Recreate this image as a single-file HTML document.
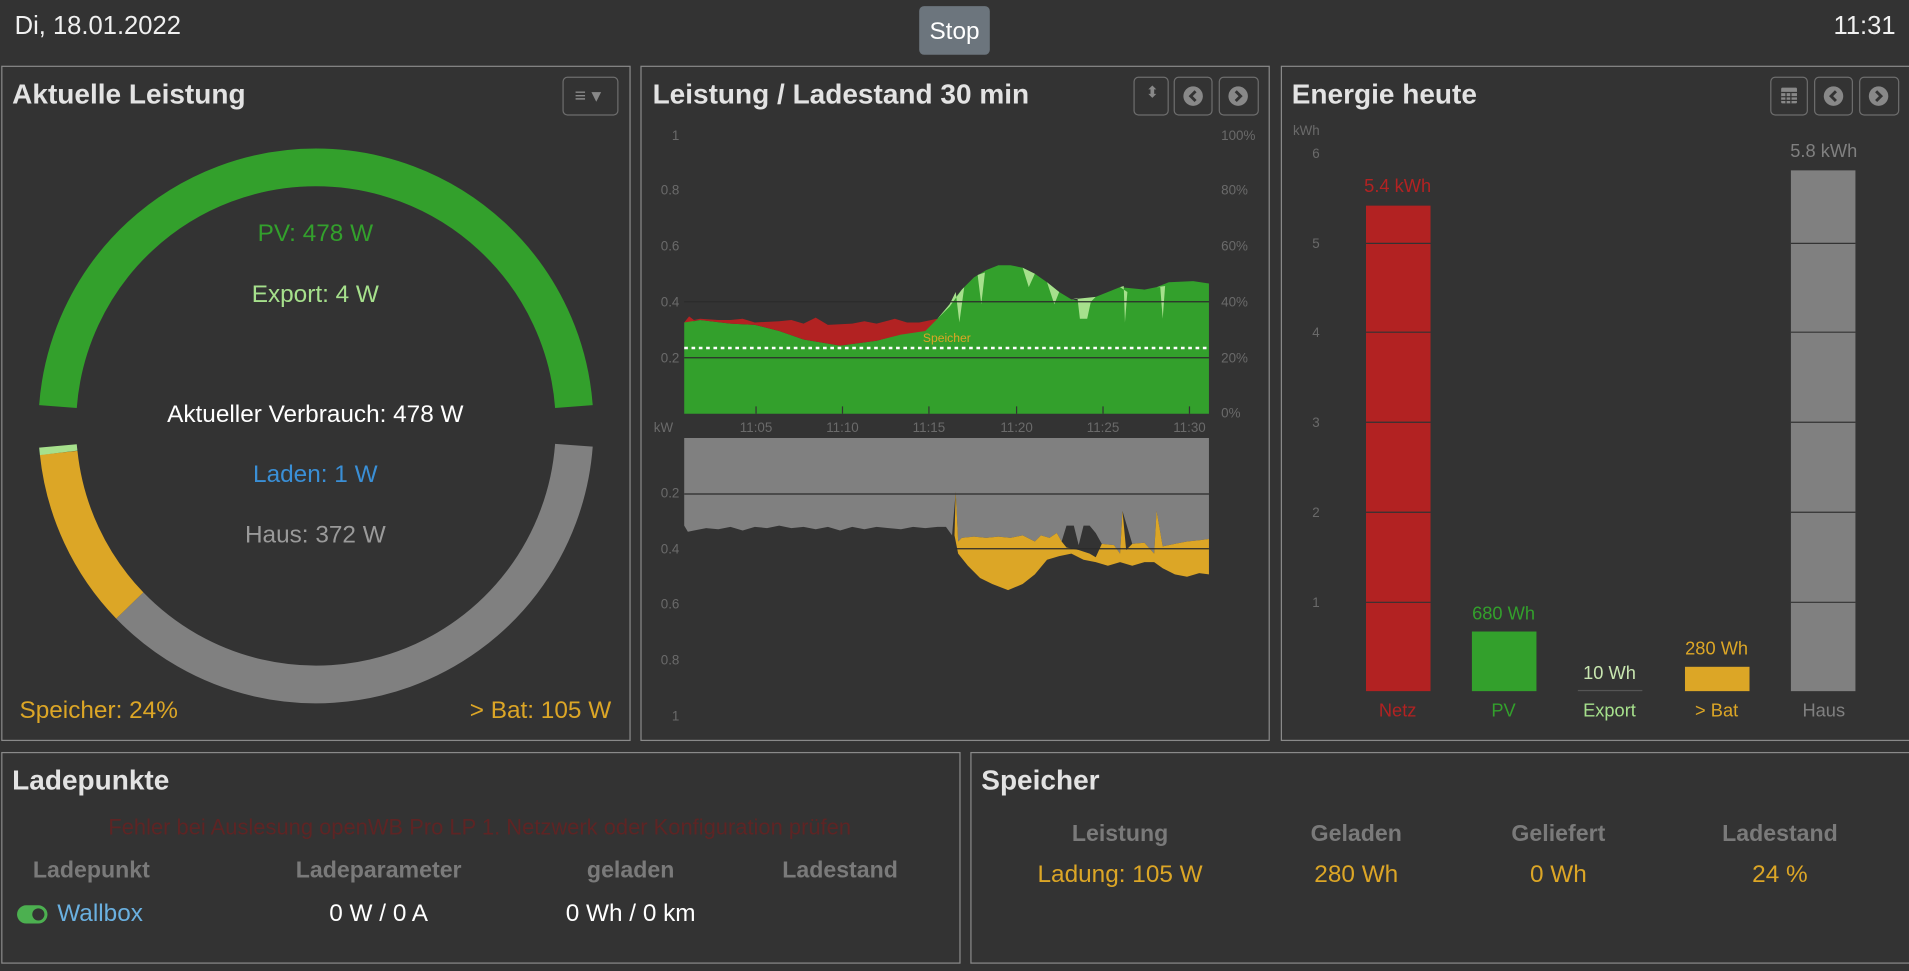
<!DOCTYPE html>
<html><head><meta charset="utf-8"><style>
html,body{margin:0;padding:0;background:#333;width:1909px;height:971px;overflow:hidden}
#c{position:absolute;left:0;top:0;width:1568px;height:798px;transform:scale(1.21747,1.21679);transform-origin:0 0;font-family:"Liberation Sans",sans-serif;color:#e6e6e6}
.a{position:absolute;white-space:nowrap}
.p{position:absolute;border:1px solid #8a8a8a;box-sizing:border-box}
.t{position:absolute;font-size:23px;font-weight:bold;color:#e3e3e3}
.btn{position:absolute;border:1px solid #6d6d6d;border-radius:4px;box-sizing:border-box;height:32px}
.c{transform:translateX(-50%)}
.r{transform:translateX(-100%)}
.ax{font-size:11px;fill:#6a6a6a;font-family:"Liberation Sans",sans-serif}
</style></head><body><div id="c">
<div class="a" style="left:12px;top:10px;font-size:21px;color:#f0f0f0">Di, 18.01.2022</div>
<div class="a" style="left:755px;top:5px;width:58px;height:40px;background:#6c757d;border-radius:4px;color:#fff;font-size:20px;text-align:center;line-height:42px">Stop</div>
<div class="a r" style="left:1557px;top:10px;font-size:21px;color:#f0f0f0">11:31</div>

<div class="p" style="left:1px;top:54px;width:517px;height:555px"></div>
<div class="p" style="left:526px;top:54px;width:517px;height:555px"></div>
<div class="p" style="left:1052px;top:54px;width:517px;height:555px"></div>
<div class="p" style="left:1px;top:618px;width:788px;height:174px"></div>
<div class="p" style="left:797px;top:618px;width:772px;height:174px"></div>

<div class="t" style="left:10px;top:64px">Aktuelle Leistung</div>
<div class="t" style="left:536px;top:64px">Leistung / Ladestand 30 min</div>
<div class="t" style="left:1061px;top:64px">Energie heute</div>
<div class="t" style="left:10px;top:628px">Ladepunkte</div>
<div class="t" style="left:806px;top:628px">Speicher</div>

<div class="btn" style="left:462px;top:63px;width:46px"><span class="a" style="left:9px;top:5px;color:#888;font-size:16px">≡ ▾</span></div>
<div class="btn" style="left:931px;top:63px;width:29px"><span class="a" style="left:9px;top:4px;color:#888;font-size:13px">⬍</span></div>
<div class="btn" style="left:964px;top:63px;width:32px"></div>
<div class="btn" style="left:1001px;top:63px;width:33px"></div>
<div class="btn" style="left:1454px;top:63px;width:31px"></div>
<div class="btn" style="left:1490px;top:63px;width:32px"></div>
<div class="btn" style="left:1527px;top:63px;width:33px"></div>

<svg class="a" style="left:0;top:0" width="1568" height="798">
<g fill="#888"><circle cx="980" cy="79" r="8"/><circle cx="1017" cy="79" r="8"/><circle cx="1506" cy="79" r="8"/><circle cx="1543" cy="79" r="8"/>
<rect x="1463" y="72" width="13" height="13" rx="1"/></g>
<g stroke="#333" stroke-width="2.4" fill="none"><path d="M982 75l-4 4 4 4M1015 75l4 4-4 4M1508 75l-4 4 4 4M1541 75l4 4-4 4"/></g>
<g stroke="#333" stroke-width="1"><path d="M1463 76h13M1463 79.5h13M1463 82.5h13M1467 76v9M1471 76v9"/></g>
<!-- gauge -->
<g fill="none" stroke-width="31">
<path d="M47.6 334.1A212.5 212.5 0 0 1 471.4 334.1" stroke="#33a02c"/>
<path d="M471.4 365.9A212.5 212.5 0 0 1 106.6 497.6" stroke="#808080"/>
<path d="M106.6 497.6A212.5 212.5 0 0 1 48.2 372.2" stroke="#dca626"/>
<path d="M48.2 372.2A212.5 212.5 0 0 1 47.6 366.5" stroke="#a6e08c"/>
</g>
<!-- top chart -->
<path d="M562 340V265L566 263 570 264 575 263 600 266 620 267 640 272 660 279 690 284 720 280 750 272 770 262 780 250 790 238 800 228 810 222 820 218 830 218 840 220 850 225 860 232 870 240 880 246 890 248 900 244 910 240 920 236 930 237 940 238 950 236 960 232 980 231 993 233V340Z" fill="#33a02c"/>
<path d="M562 265L566 260 570 263 575 262 590 263 600 263 610 262 620 265 640 264 650 263 660 266 670 261 680 267 700 266 710 264 720 266 735 262 745 265 755 265 770 262 760 272 740 275 720 280 690 284 660 279 640 272 620 267 600 266 575 263Z" fill="#b22222"/>
<path d="M770 262L780 250 785 240 788 265 792 236 800 228 790 238 780 252ZM880 246L885 245 887 262 893 262 896 248 900 244ZM920 236L923 235 924 265 926 240ZM950 236L953 236 955 262 957 235ZM840 220L845 236 850 225ZM860 232L866 250 870 240ZM803 226L806 250 809 224Z" fill="#a6e08c"/>
<path d="M562 294H993M562 248H993" stroke="#2b2b2b" stroke-width="1"/>
<path d="M562 286H993" stroke="#fff" stroke-width="2" stroke-dasharray="3 3"/>
<text x="758" y="281" font-size="10" fill="#dca626" font-family="Liberation Sans">Speicher</text>
<g stroke="#333" stroke-width="1"><path d="M621 334v6M692 334v6M763 334v6M835 334v6M906 334v6M977 334v6"/></g>
<g class="ax" text-anchor="end"><text x="558" y="115">1</text><text x="558" y="160">0.8</text><text x="558" y="206">0.6</text><text x="558" y="252">0.4</text><text x="558" y="298">0.2</text>
<text x="558" y="409">0.2</text><text x="558" y="455">0.4</text><text x="558" y="500">0.6</text><text x="558" y="546">0.8</text><text x="558" y="592">1</text></g>
<g class="ax"><text x="1003" y="115">100%</text><text x="1003" y="160">80%</text><text x="1003" y="206">60%</text><text x="1003" y="252">40%</text><text x="1003" y="298">20%</text><text x="1003" y="343">0%</text><text x="537" y="355">kW</text></g>
<g class="ax" text-anchor="middle"><text x="621" y="355">11:05</text><text x="692" y="355">11:10</text><text x="763" y="355">11:15</text><text x="835" y="355">11:20</text><text x="906" y="355">11:25</text><text x="977" y="355">11:30</text></g>
<!-- bottom chart -->
<path d="M562 360H993V443L985 444 975 445 965 447 955 449 950 420 948 455 940 446 930 447 922 420 920 455 915 448 905 447 900 438 895 432 890 432 886 448 882 432 876 432 872 445 868 438 862 442 855 440 850 445 840 440 830 442 820 441 810 442 800 441 790 442 787 445 785 404 782 440 777 433 770 433 760 434 750 433 740 435 730 434 720 433 710 435 700 433 690 436 680 433 670 435 660 433 650 434 640 432 630 434 620 433 610 436 600 433 590 435 580 434 570 436 565 437 562 432Z" fill="#808080"/>
<path d="M785 404L787 445 790 442 800 441 810 442 820 441 830 442 840 440 850 445 855 440 862 442 868 438 872 445 876 450 886 452 895 455 900 458 905 447 915 448 920 455 922 420 925 452 930 447 940 446 948 455 950 420 955 449 965 447 975 445 985 444 993 443V472L985 471 975 474 965 472 955 467 948 462 940 462 930 465 920 462 910 465 900 462 890 460 880 455 870 457 860 460 850 472 840 480 828 485 815 480 805 475 795 465 787 455 784 440Z" fill="#dca626"/>
<path d="M562 406H993M785 451H993" stroke="#2b2b2b" stroke-width="1"/>
<!-- bar chart -->
<g class="ax" text-anchor="end"><text x="1084" y="130">6</text><text x="1084" y="204">5</text><text x="1084" y="277">4</text><text x="1084" y="351">3</text><text x="1084" y="425">2</text><text x="1084" y="499">1</text></g>
<text x="1062" y="111" class="ax">kWh</text>
<rect x="1122" y="169" width="53" height="399" fill="#b22222"/>
<rect x="1209" y="519" width="53" height="49" fill="#33a02c"/>
<rect x="1296" y="567" width="53" height="1" fill="#555"/>
<rect x="1384" y="548" width="53" height="20" fill="#dca626"/>
<rect x="1471" y="140" width="53" height="428" fill="#808080"/>
<g stroke="#333" stroke-width="1"><path d="M1122 200h53M1122 273h53M1122 347h53M1122 421h53M1122 495h53M1471 200h53M1471 273h53M1471 347h53M1471 421h53M1471 495h53"/></g>
<g font-family="Liberation Sans" font-size="15" text-anchor="middle">
<text x="1148" y="158" fill="#b22222">5.4 kWh</text><text x="1235" y="509" fill="#33a02c">680 Wh</text><text x="1322" y="558" fill="#c8e6b0">10 Wh</text><text x="1410" y="538" fill="#dca626">280 Wh</text><text x="1498" y="129" fill="#808080">5.8 kWh</text>
<text x="1148" y="589" fill="#b22222">Netz</text><text x="1235" y="589" fill="#33a02c">PV</text><text x="1322" y="589" fill="#a6e08c">Export</text><text x="1410" y="589" fill="#dca626">&gt; Bat</text><text x="1498" y="589" fill="#808080">Haus</text></g>
<!-- toggle -->
<rect x="14" y="744" width="25" height="15" rx="7.5" fill="#4cb050"/><circle cx="31.5" cy="751.5" r="5" fill="#333"/>
</svg>

<div class="a c" style="left:259px;top:181px;font-size:20px;color:#33a02c">PV: 478 W</div>
<div class="a c" style="left:259px;top:231px;font-size:20px;color:#a6e08c">Export: 4 W</div>
<div class="a c" style="left:259px;top:330px;font-size:20px;color:#fff">Aktueller Verbrauch: 478 W</div>
<div class="a c" style="left:259px;top:379px;font-size:20px;color:#3a8fd6">Laden: 1 W</div>
<div class="a c" style="left:259px;top:429px;font-size:20px;color:#9a9a9a">Haus: 372 W</div>
<div class="a" style="left:16px;top:573px;font-size:20px;color:#dca626">Speicher: 24%</div>
<div class="a r" style="left:502px;top:573px;font-size:20px;color:#dca626">&gt; Bat: 105 W</div>

<div class="a c" style="left:394px;top:670px;font-size:18px;color:#5e2424">Fehler bei Auslesung openWB Pro LP 1. Netzwerk oder Konfiguration prüfen</div>
<div class="a c" style="left:75px;top:705px;font-size:19px;font-weight:bold;color:#7a7a7a">Ladepunkt</div>
<div class="a c" style="left:311px;top:705px;font-size:19px;font-weight:bold;color:#7a7a7a">Ladeparameter</div>
<div class="a c" style="left:518px;top:705px;font-size:19px;font-weight:bold;color:#7a7a7a">geladen</div>
<div class="a c" style="left:690px;top:705px;font-size:19px;font-weight:bold;color:#7a7a7a">Ladestand</div>
<div class="a" style="left:47px;top:740px;font-size:20px;color:#6ab0e0">Wallbox</div>
<div class="a c" style="left:311px;top:740px;font-size:20px;color:#fff">0 W / 0 A</div>
<div class="a c" style="left:518px;top:740px;font-size:20px;color:#fff">0 Wh / 0 km</div>

<div class="a c" style="left:920px;top:675px;font-size:19px;font-weight:bold;color:#7a7a7a">Leistung</div>
<div class="a c" style="left:1114px;top:675px;font-size:19px;font-weight:bold;color:#7a7a7a">Geladen</div>
<div class="a c" style="left:1280px;top:675px;font-size:19px;font-weight:bold;color:#7a7a7a">Geliefert</div>
<div class="a c" style="left:1462px;top:675px;font-size:19px;font-weight:bold;color:#7a7a7a">Ladestand</div>
<div class="a c" style="left:920px;top:708px;font-size:20px;color:#dca626">Ladung: 105 W</div>
<div class="a c" style="left:1114px;top:708px;font-size:20px;color:#dca626">280 Wh</div>
<div class="a c" style="left:1280px;top:708px;font-size:20px;color:#dca626">0 Wh</div>
<div class="a c" style="left:1462px;top:708px;font-size:20px;color:#dca626">24 %</div>
</div></body></html>
